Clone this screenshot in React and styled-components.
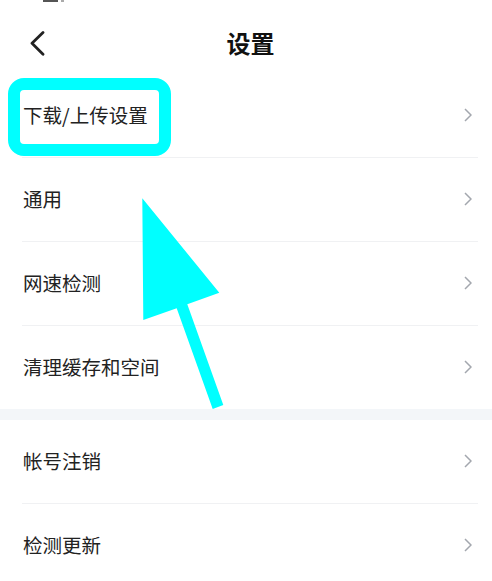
import React from 'react';
import styled, { createGlobalStyle } from 'styled-components';

const GlobalStyle = createGlobalStyle`
  html, body {
    margin: 0;
    padding: 0;
    background: #ffffff;
  }
  body {
    font-family: "Noto Sans CJK SC", "Noto Sans", sans-serif;
    color: #1c1c1c;
    overflow: hidden;
  }
`;

const Page = styled.div`
  position: relative;
  width: 492px;
  height: 581px;
  overflow: hidden;
  background: #ffffff;
`;

const StatusSliver = styled.div`
  display: flex;
  gap: 3px;
  height: 0;
  padding-left: 43px;
  overflow: visible;
`;

const StatusBit = styled.span`
  display: block;
  width: ${({ $w }) => $w}px;
  height: 2px;
  background: ${({ $c }) => $c};
`;

const Header = styled.header`
  display: grid;
  grid-template-columns: 62px 1fr 53px;
  align-items: center;
  height: 62px;
  padding-top: 12px;
`;

const BackButton = styled.button`
  display: flex;
  align-items: center;
  border: none;
  background: none;
  padding: 0 0 0 30px;
  height: 30px;
  cursor: pointer;
`;

const Title = styled.h1`
  margin: 0;
  text-align: center;
  font-size: 24px;
  font-weight: 700;
  color: #111111;
  line-height: 1;
`;

const Section = styled.ul`
  list-style: none;
  margin: 0;
  padding: 0;
`;

const Row = styled.li`
  display: flex;
  align-items: center;
  justify-content: space-between;
  margin: 0 14px 0 22px;
  padding-bottom: 2px;
  box-sizing: border-box;
  height: ${({ $last }) => ($last ? '83px' : '84px')};
  border-bottom: ${({ $last }) => ($last ? 'none' : '1px solid #f0f1f3')};
  font-size: 19.5px;
  color: #222222;
`;

const Label = styled.span`
  padding-left: 1px;
  line-height: 1;
`;

const ChevronBox = styled.span`
  display: flex;
  margin-right: 6px;
`;

const Band = styled.div`
  height: 11px;
  background: #f3f6f9;
`;

const Highlight = styled.div`
  position: absolute;
  left: 8px;
  top: 78px;
  width: 163px;
  height: 78px;
  box-sizing: border-box;
  border: 12px solid #00ffff;
  border-radius: 16px;
  pointer-events: none;
`;

const ArrowLayer = styled.svg`
  position: absolute;
  left: 0;
  top: 0;
  pointer-events: none;
`;

const Chevron = () => (
  <ChevronBox>
    <svg width="8" height="14" viewBox="0 0 8 14">
      <path d="M1 1 L7 7 L1 13" fill="none" stroke="#a3a7ae" strokeWidth="1.5" />
    </svg>
  </ChevronBox>
);

const BackIcon = () => (
  <svg width="15" height="25" viewBox="0 0 15 25">
    <path
      d="M13 1.5 L2 12.3 L13 23.2"
      fill="none"
      stroke="#222222"
      strokeWidth="2.8"
      strokeLinecap="round"
      strokeLinejoin="round"
    />
  </svg>
);

const firstGroup = ['下载/上传设置', '通用', '网速检测', '清理缓存和空间'];
const secondGroup = ['帐号注销', '检测更新'];

const renderRows = (items) =>
  items.map((item, i) => (
    <Row key={item} $last={i === items.length - 1}>
      <Label>{item}</Label>
      <Chevron />
    </Row>
  ));

const App = () => (
  <>
    <GlobalStyle />
    <Page>
      <StatusSliver>
        <StatusBit $w={15} $c="#555" />
        <StatusBit $w={3} $c="#aaa" />
      </StatusSliver>
      <Header>
        <BackButton aria-label="返回">
          <BackIcon />
        </BackButton>
        <Title>设置</Title>
        <span />
      </Header>
      <Section>{renderRows(firstGroup)}</Section>
      <Band />
      <Section>{renderRows(secondGroup)}</Section>

      <Highlight />
      <ArrowLayer width="492" height="581" viewBox="0 0 492 581">
        <polygon
          points="142.3,198.3 219.3,292.7 187.3,304.3 223.3,405 212.7,409 176.7,308.3 143.3,320"
          fill="#00ffff"
        />
      </ArrowLayer>
    </Page>
  </>
);

export default App;
